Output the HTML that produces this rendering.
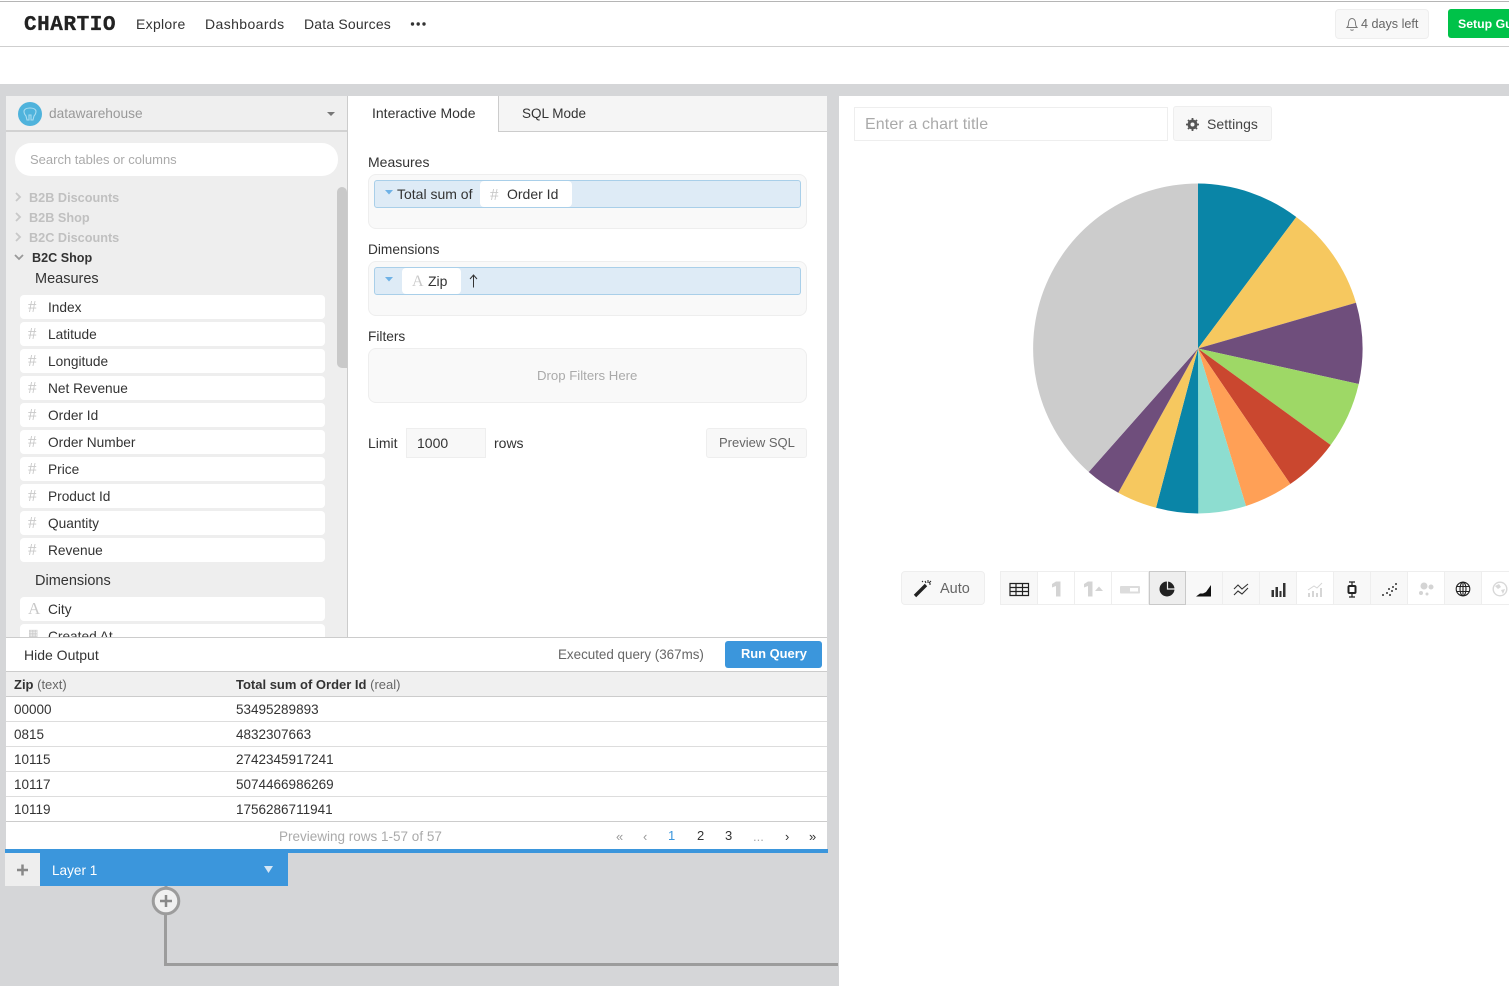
<!DOCTYPE html>
<html><head><meta charset="utf-8"><title>Chartio</title>
<style>
html,body{margin:0;padding:0}
body{width:1509px;height:986px;position:relative;overflow:hidden;background:#d5d6d8;font-family:"Liberation Sans",sans-serif;font-size:14px;color:#333}
.b{position:absolute;box-sizing:border-box}
.t{position:absolute;white-space:nowrap;line-height:20px;color:#333}
.item{position:absolute;left:20px;width:305px;height:24px;background:#fff;border-radius:4px}
.item .n{position:absolute;left:28px;top:3px;line-height:20px;white-space:nowrap;color:#333;font-size:13.7px}
.item .h{position:absolute;left:8px;top:2px;line-height:20px;color:#c9c9c9;font-family:"Liberation Serif",serif;font-size:17px}
.g{color:#c0c0c0;font-weight:bold;font-size:12.7px}
.tb{position:absolute;top:571px;height:34px;width:37px;box-sizing:border-box;border:1px solid #eee;border-left:0;background:#f8f8f8}
.tb.d{background:#fff}
.num{font-size:13.5px}
</style></head><body>

<!-- nav -->
<div class="b" style="left:0;top:0;width:1509px;height:84px;background:#fff"></div>
<div class="b" style="left:0;top:1px;width:1509px;height:1px;background:#b5b5b5"></div>
<div class="b" style="left:0;top:46px;width:1509px;height:1px;background:#cfcfcf"></div>
<div class="t" style="left:24px;top:16px;font-family:'Liberation Mono',monospace;font-weight:bold;font-size:21px;letter-spacing:.55px;color:#222;-webkit-text-stroke:.3px #222">CHARTIO</div>
<div class="t" style="left:136px;top:14px;letter-spacing:.3px">Explore</div>
<div class="t" style="left:205px;top:14px;letter-spacing:.4px">Dashboards</div>
<div class="t" style="left:304px;top:14px;letter-spacing:.18px">Data Sources</div>
<svg class="b" style="left:410px;top:20px" width="18" height="8"><circle cx="2.500" cy="4" r="1.700" fill="#333"/><circle cx="8.200" cy="4" r="1.700" fill="#333"/><circle cx="14" cy="4" r="1.700" fill="#333"/></svg>
<div class="b" style="left:1335px;top:9px;width:94px;height:30px;background:#f8f8f8;border:1px solid #eee;border-radius:4px"></div>
<svg class="b" style="left:1345px;top:16px" width="14" height="16" fill="none" stroke="#777" stroke-width="1"><path d="M2 11.500c1-1 1.500-2 1.500-4.500 0-2.500 1.500-4.500 3.500-4.500s3.500 2 3.500 4.500c0 2.500.5 3.500 1.500 4.500zM5.500 13.500c.5 1 2.500 1 3 0"/></svg>
<div class="t" style="left:1361px;top:14px;color:#666;font-size:12.6px">4 days left</div>
<div class="b" style="left:1448px;top:9px;width:70px;height:29px;background:#00c249;border-radius:3px"></div>
<div class="t" style="left:1458px;top:14px;color:#fff;font-weight:bold;font-size:12.3px">Setup Guide</div>

<!-- main panel -->
<div class="b" style="left:6px;top:96px;width:342px;height:541px;background:#eee;border-right:1px solid #ccc"></div>
<div class="b" style="left:348px;top:96px;width:479px;height:541px;background:#fff"></div>
<div class="b" style="left:6px;top:96px;width:341px;height:36px;background:#efefef;border-bottom:2px solid #d2d2d2"></div>
<svg class="b" style="left:18px;top:102px" width="25" height="25"><circle cx="12" cy="12" r="12" fill="#4fb3dc"/><path d="M6 9c1-4 11-4 12 0 0 3-1 4-2 5l-1 4h-2v-5h-2v5h-2l-1-4c-1-1-2-2-2-5z" fill="none" stroke="#a9dcf0" stroke-width="1.100"/></svg>
<div class="t" style="left:49px;top:104px;color:#999;font-size:13.7px">datawarehouse</div>
<svg class="b" style="left:326px;top:111px" width="10" height="6"><path d="M1 1h8l-4 4z" fill="#777"/></svg>
<div class="b" style="left:15px;top:143px;width:323px;height:33px;background:#fff;border-radius:16px"></div>
<div class="t" style="left:30px;top:150px;color:#aaa;font-size:13px">Search tables or columns</div>
<div class="b" style="left:337px;top:187px;width:10px;height:181px;background:#c9c9c9;border-radius:5px 5px 0 5px"></div>

<svg class="b" style="left:14px;top:190px" width="12" height="76" fill="none" stroke="#c8c8c8" stroke-width="1.800"><path d="M2 3l4 4-4 4M2 23l4 4-4 4M2 43l4 4-4 4"/><path d="M1 65l4 4 4-4" stroke="#999"/></svg>
<div class="t g" style="left:29px;top:188px">B2B Discounts</div>
<div class="t g" style="left:29px;top:208px">B2B Shop</div>
<div class="t g" style="left:29px;top:228px">B2C Discounts</div>
<div class="t" style="left:32px;top:248px;font-weight:bold;font-size:12.6px">B2C Shop</div>
<div class="t" style="left:35px;top:269px;font-size:14.5px">Measures</div>

<div class="item" style="top:295px"><span class="h">#</span><span class="n">Index</span></div>
<div class="item" style="top:322px"><span class="h">#</span><span class="n">Latitude</span></div>
<div class="item" style="top:349px"><span class="h">#</span><span class="n">Longitude</span></div>
<div class="item" style="top:376px"><span class="h">#</span><span class="n">Net Revenue</span></div>
<div class="item" style="top:403px"><span class="h">#</span><span class="n">Order Id</span></div>
<div class="item" style="top:430px"><span class="h">#</span><span class="n">Order Number</span></div>
<div class="item" style="top:457px"><span class="h">#</span><span class="n">Price</span></div>
<div class="item" style="top:484px"><span class="h">#</span><span class="n">Product Id</span></div>
<div class="item" style="top:511px"><span class="h">#</span><span class="n">Quantity</span></div>
<div class="item" style="top:538px"><span class="h">#</span><span class="n">Revenue</span></div>
<div class="t" style="left:35px;top:571px;font-size:14.5px">Dimensions</div>
<div class="item" style="top:597px"><span class="h">A</span><span class="n">City</span></div>
<div class="item" style="top:624px;height:13px;overflow:hidden;border-radius:4px 4px 0 0"><span class="h" style="font-size:11px;top:0">▦</span><span class="n">Created At</span></div>

<!-- tabs -->
<div class="b" style="left:498px;top:96px;width:329px;height:36px;background:#f5f5f5;border-bottom:1px solid #ccc;border-left:1px solid #ccc"></div>
<div class="t" style="left:372px;top:103px">Interactive Mode</div>
<div class="t" style="left:522px;top:104px;font-size:13.5px">SQL Mode</div>

<div class="t" style="left:368px;top:152px">Measures</div>
<div class="b" style="left:368px;top:174px;width:439px;height:55px;background:#f9f9f9;border:1px solid #eee;border-radius:8px"></div>
<div class="b" style="left:374px;top:180px;width:427px;height:28px;background:#deebf6;border:1px solid #a9cfe9;border-radius:3px"></div>
<svg class="b" style="left:385px;top:190px" width="8" height="5"><path d="M0 0h8l-4 4.500z" fill="#6fb2e6"/></svg>
<div class="t" style="left:397px;top:184px">Total sum of</div>
<div class="b" style="left:480px;top:181px;width:92px;height:26px;background:#fff;border-radius:4px"></div>
<div class="t" style="left:490px;top:185px;color:#c9c9c9;font-family:'Liberation Serif',serif;font-size:17px">#</div>
<div class="t" style="left:507px;top:184px">Order Id</div>

<div class="t" style="left:368px;top:240px;font-size:13.7px">Dimensions</div>
<div class="b" style="left:368px;top:261px;width:439px;height:55px;background:#f9f9f9;border:1px solid #eee;border-radius:8px"></div>
<div class="b" style="left:374px;top:267px;width:427px;height:28px;background:#deebf6;border:1px solid #a9cfe9;border-radius:3px"></div>
<svg class="b" style="left:385px;top:277px" width="8" height="5"><path d="M0 0h8l-4 4.500z" fill="#6fb2e6"/></svg>
<div class="b" style="left:402px;top:268px;width:59px;height:26px;background:#fff;border-radius:4px"></div>
<div class="t" style="left:412px;top:272px;color:#c9c9c9;font-family:'Liberation Serif',serif;font-size:16px">A</div>
<div class="t" style="left:428px;top:271px">Zip</div>
<svg class="b" style="left:469px;top:274px" width="10" height="14" fill="none" stroke="#333"><path d="M4.500 13.500V1.500M1 5l3.500-4 3.500 4"/></svg>

<div class="t" style="left:368px;top:327px;font-size:13.7px">Filters</div>
<div class="b" style="left:368px;top:348px;width:439px;height:55px;background:#f9f9f9;border:1px solid #eee;border-radius:8px"></div>
<div class="t" style="left:537px;top:366px;color:#aaa;font-size:13.2px">Drop Filters Here</div>
<div class="t" style="left:368px;top:433px">Limit</div>
<div class="b" style="left:406px;top:428px;width:80px;height:30px;background:#f8f8f8;border:1px solid #eee"></div>
<div class="t" style="left:417px;top:433px">1000</div>
<div class="t" style="left:494px;top:433px">rows</div>
<div class="b" style="left:706px;top:428px;width:101px;height:30px;background:#f8f8f8;border:1px solid #eee;border-radius:3px"></div>
<div class="t" style="left:719px;top:433px;color:#666;font-size:13px">Preview SQL</div>

<!-- output -->
<div class="b" style="left:6px;top:637px;width:821px;height:212px;background:#fff;border-top:1px solid #ccc"></div>
<div class="t" style="left:24px;top:645px">Hide Output</div>
<div class="t" style="left:558px;top:645px;color:#666;font-size:13.4px">Executed query (367ms)</div>
<div class="b" style="left:725px;top:641px;width:97px;height:27px;background:#3b96dc;border-radius:3px"></div>
<div class="t" style="left:741px;top:644px;color:#fff;font-weight:bold;font-size:12.9px">Run Query</div>
<div class="b" style="left:6px;top:671px;width:821px;height:26px;background:#f0f0f0;border-top:1px solid #ccc;border-bottom:1px solid #ccc"></div>
<div class="t" style="left:14px;top:675px;font-size:13px;color:#666"><b style="color:#333">Zip</b> (text)</div>
<div class="t" style="left:236px;top:675px;font-size:13px;color:#666"><b style="color:#333">Total sum of Order Id</b> (real)</div>
<div class="b" style="left:6px;top:721px;width:821px;height:1px;background:#ddd"></div>
<div class="b" style="left:6px;top:746px;width:821px;height:1px;background:#ddd"></div>
<div class="b" style="left:6px;top:771px;width:821px;height:1px;background:#ddd"></div>
<div class="b" style="left:6px;top:796px;width:821px;height:1px;background:#ddd"></div>
<div class="b" style="left:6px;top:821px;width:821px;height:1px;background:#ccc"></div>
<div class="t num" style="left:14px;top:700px">00000</div><div class="t num" style="left:236px;top:700px">53495289893</div>
<div class="t num" style="left:14px;top:725px">0815</div><div class="t num" style="left:236px;top:725px">4832307663</div>
<div class="t num" style="left:14px;top:750px">10115</div><div class="t num" style="left:236px;top:750px">2742345917241</div>
<div class="t num" style="left:14px;top:775px">10117</div><div class="t num" style="left:236px;top:775px">5074466986269</div>
<div class="t num" style="left:14px;top:800px">10119</div><div class="t num" style="left:236px;top:800px">1756286711941</div>
<div class="t" style="left:279px;top:827px;color:#aaa;font-size:13.5px">Previewing rows 1-57 of 57</div>
<div class="t" style="left:616px;top:827px;color:#999;font-size:13px">«</div>
<div class="t" style="left:643px;top:827px;color:#999;font-size:13px">‹</div>
<div class="t" style="left:668px;top:826px;color:#3b96dc;font-size:13px">1</div>
<div class="t" style="left:697px;top:826px;font-size:13px">2</div>
<div class="t" style="left:725px;top:826px;font-size:13px">3</div>
<div class="t" style="left:753px;top:827px;color:#aaa;font-size:13px">...</div>
<div class="t" style="left:785px;top:827px;font-size:13px">›</div>
<div class="t" style="left:809px;top:827px;font-size:13px">»</div>

<!-- layers -->
<div class="b" style="left:5px;top:849px;width:823px;height:4px;background:#3b96dc"></div>
<div class="b" style="left:5px;top:853px;width:35px;height:33px;background:#eee"></div>
<svg class="b" style="left:17px;top:864px" width="12" height="12"><path d="M0 6h11M5.500 .5v11" stroke="#888" stroke-width="2.500"/></svg>
<div class="b" style="left:40px;top:853px;width:248px;height:33px;background:#3b96dc"></div>
<div class="t" style="left:52px;top:861px;color:#fff;font-size:13.6px">Layer 1</div>
<svg class="b" style="left:264px;top:866px" width="9" height="7"><path d="M0 0h9l-4.500 7z" fill="#d5e6f5"/></svg>

<!-- right panel -->
<div class="b" style="left:839px;top:96px;width:670px;height:890px;background:#fff"></div>
<div class="b" style="left:854px;top:107px;width:314px;height:34px;background:#fff;border:1px solid #eee"></div>
<div class="t" style="left:865px;top:115px;color:#aaa;font-size:16px;letter-spacing:.12px">Enter a chart title</div>
<div class="b" style="left:1173px;top:106px;width:99px;height:35px;background:#f8f8f8;border:1px solid #eee;border-radius:3px"></div>
<svg class="b" style="left:1186px;top:118px" width="13" height="13"><circle cx="6.500" cy="6.500" r="3.500" fill="none" stroke="#555" stroke-width="3"/><path d="M6.500 0v13M0 6.500h13M2 2l9 9M11 2l-9 9" stroke="#555" stroke-width="1.800" stroke-dasharray="2.200 8.600 2.200 0"/></svg>
<div class="t" style="left:1207px;top:114px;color:#444;letter-spacing:.05px">Settings</div>

<!-- overlay svg: connector + pie -->
<svg class="b" style="left:0;top:0" width="1509" height="986">
<path d="M165.500 915V964.500H838" fill="none" stroke="#9c9c9c" stroke-width="3"/>
<path d="M166 886v3" stroke="#9c9c9c" stroke-width="3"/>
<circle cx="166" cy="901" r="12.800" fill="#f0f0f0" stroke="#9c9c9c" stroke-width="3"/>
<path d="M160 901h12M166 895v12" stroke="#888" stroke-width="2.500"/>
<g>
<path d="M1198 348.500L1198 183.500A165 165 0 0 1 1296.300 217Z" fill="#0a85a7"/>
<path d="M1198 348.500L1296.300 217A165 165 0 0 1 1356 302.700Z" fill="#f6c85f"/>
<path d="M1198 348.500L1356 302.700A165 165 0 0 1 1358.700 384Z" fill="#6f4e7c"/>
<path d="M1198 348.500L1358.700 384A165 165 0 0 1 1330.700 445Z" fill="#9ed866"/>
<path d="M1198 348.500L1330.700 445A165 165 0 0 1 1290.300 484Z" fill="#ca472f"/>
<path d="M1198 348.500L1290.300 484A165 165 0 0 1 1246 506Z" fill="#ffa056"/>
<path d="M1198 348.500L1246 506A165 165 0 0 1 1198.300 513.500Z" fill="#8dddd0"/>
<path d="M1198 348.500L1198.300 513.500A165 165 0 0 1 1156 507.700Z" fill="#0a85a7"/>
<path d="M1198 348.500L1156 507.700A165 165 0 0 1 1118.300 492.700Z" fill="#f6c85f"/>
<path d="M1198 348.500L1118.300 492.700A165 165 0 0 1 1088.700 472Z" fill="#6f4e7c"/>
<path d="M1198 348.500L1088.700 472A165 165 0 0 1 1198 183.500Z" fill="#cccccc"/>
</g>
</svg>

<!-- chart toolbar -->
<div class="b" style="left:901px;top:571px;width:84px;height:34px;background:#f8f8f8;border:1px solid #eee;border-radius:4px"></div>
<svg class="b" style="left:913px;top:579px" width="20" height="19"><path d="M2 17L13 6" stroke="#222" stroke-width="3.400"/><path d="M15 1v3M12 2l1 2M18 5h-2M18 2l-2 2M9 2l1 1" stroke="#222" stroke-width="1"/></svg>
<div class="t" style="left:940px;top:579px;color:#666;font-size:14.5px">Auto</div>

<div class="tb" style="left:1000px;width:38px;border-left:1px solid #eee"></div>
<div class="tb d" style="left:1038px"></div>
<div class="tb d" style="left:1075px"></div>
<div class="tb d" style="left:1112px"></div>
<div class="tb" style="left:1149px;background:#eee;border:1px solid #c9c9c9"></div>
<div class="tb" style="left:1186px"></div>
<div class="tb" style="left:1223px"></div>
<div class="tb" style="left:1260px"></div>
<div class="tb d" style="left:1297px"></div>
<div class="tb" style="left:1334px"></div>
<div class="tb" style="left:1371px"></div>
<div class="tb d" style="left:1408px"></div>
<div class="tb" style="left:1445px"></div>
<div class="tb d" style="left:1482px"></div>

<svg class="b" style="left:1000px;top:571px" width="509" height="34">
<!-- table -->
<path d="M10 12.500h18.500v12H10zM10 16.500h18.500M10 20.500h18.500M16 12.500v12M22.500 12.500v12" fill="none" stroke="#222" stroke-width="1.200"/>
<!-- 1 -->
<path d="M56 10.500h4.500v15H56v-10.500l-4 1.500v-3.500z" fill="#d4d4d4"/>
<!-- 1^ -->
<path d="M88 10.500h4.500v15H88v-10.500l-4 1.500v-3.500z" fill="#d4d4d4"/><path d="M95 20l4-4.500 4 4.500z" fill="#d4d4d4"/>
<!-- gauge -->
<rect x="120" y="15" width="20" height="7.500" rx="1" fill="#dcdcdc"/><rect x="130" y="17" width="8" height="3.500" fill="#fff"/>
<!-- pie -->
<circle cx="167" cy="18" r="7.500" fill="#222"/><path d="M167.500 10v8h8" fill="none" stroke="#eee" stroke-width="1.200"/>
<!-- area -->
<path d="M196 25.500l4-3 3 0 3-1.500 5-7v11.500z" fill="#111"/>
<!-- line -->
<path d="M234 18l4-4 4 4 6-5M234 24l4-4 4 3 6-6" fill="none" stroke="#333" stroke-width="1.100"/>
<!-- bars -->
<path d="M271.500 19h2.500v7h-2.500zM275.500 16h2.500v10h-2.500zM279.500 20h2v6h-2zM283 12h2.500v14H283z" fill="#333"/>
<!-- combo disabled -->
<path d="M308 26v-4h2v4zM312 26v-6h2v6zM316 26v-4h2v4zM320 26v-9h2v9z" fill="#d6d6d6"/><path d="M308 19l6-4 3 2 5-5" fill="none" stroke="#d6d6d6"/>
<!-- box -->
<path d="M349 11h6M349 26h6M352 11v4M352 22v4" stroke="#222" stroke-width="1.200"/><rect x="348.500" y="15" width="7" height="7" rx="1" fill="#fff" stroke="#222" stroke-width="2"/>
<!-- scatter -->
<g fill="#333"><circle cx="383" cy="24" r="1"/><circle cx="387" cy="22" r="1"/><circle cx="390" cy="24" r="1"/><circle cx="389" cy="18" r="1"/><circle cx="392" cy="20" r="1"/><circle cx="393" cy="16" r="1"/><circle cx="396" cy="13" r="1"/><circle cx="396" cy="18" r="1"/></g>
<!-- bubble -->
<g fill="#d4d4d4"><circle cx="424" cy="15" r="3.500"/><circle cx="431" cy="16" r="2.500"/><circle cx="421" cy="22" r="2"/><circle cx="427" cy="23" r="1.500"/></g>
<!-- globe -->
<g fill="none" stroke="#222" stroke-width="1.100"><circle cx="463" cy="18" r="6.800"/><ellipse cx="463" cy="18" rx="3" ry="6.800"/><path d="M456.500 15.500h13M456.500 20.500h13M463 11v14"/></g>
<!-- map disabled -->
<circle cx="500" cy="18" r="6.800" fill="none" stroke="#d8d8d8" stroke-width="1.400"/><path d="M495 15l4-2 2 3-3 2zM501 19l4-1-2 5z" fill="#d8d8d8"/>
</svg>
</body></html>
